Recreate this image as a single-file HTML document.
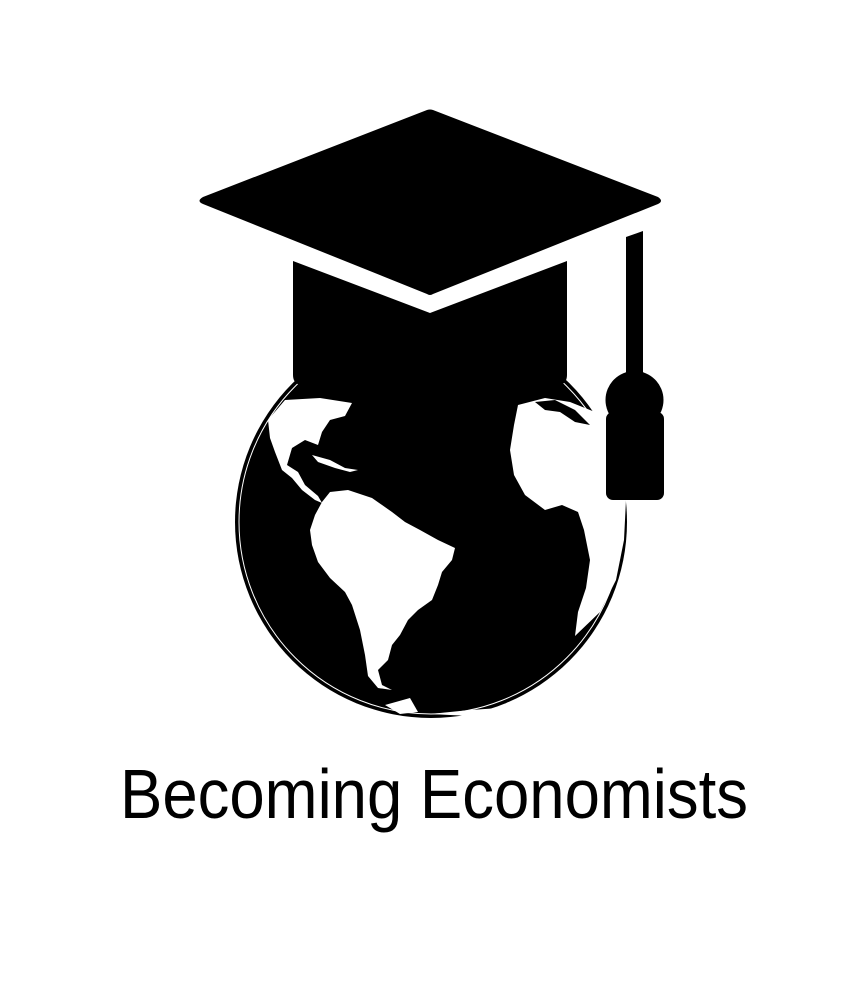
<!DOCTYPE html>
<html><head><meta charset="utf-8"><style>
html,body{margin:0;padding:0;background:#fff;width:864px;height:1000px;overflow:hidden}
</style></head><body>
<svg width="864" height="1000" viewBox="0 0 864 1000" xmlns="http://www.w3.org/2000/svg">
<rect width="864" height="1000" fill="#fff"/>
<circle cx="431" cy="522" r="196" fill="#000"/>
<circle cx="431" cy="522" r="192" fill="none" stroke="#fff" stroke-width="1"/>
<!-- North America -->
<path fill="#fff" d="M268,420 L285,400 L320,398 L352,403 L345,416 L330,420 L322,432 L318,445 L305,440 L292,448 L287,465 L298,472 L305,485 L318,496 L322,503 L315,500 L302,490 L292,478 L282,470 L275,452 L270,438 Z"/>
<path fill="#fff" d="M312,455 L330,460 L345,468 L358,470 L350,472 L335,468 L318,462 Z"/>
<!-- South America -->
<path fill="#fff" d="M330,492 L348,490 L372,498 L392,512 L405,522 L420,530 L438,540 L455,548 L452,560 L442,572 L438,585 L432,600 L418,610 L408,620 L400,635 L392,645 L388,660 L378,670 L382,685 L392,690 L378,688 L368,676 L365,655 L360,630 L352,605 L345,592 L330,578 L318,562 L312,545 L310,530 L315,515 L322,502 Z"/>
<!-- Africa -->
<path fill="#fff" d="M518,405 L545,398 L570,402 L595,412 L612,425 L622,460 L626,500 L624,540 L616,580 L600,612 L575,636 L578,612 L586,588 L590,560 L584,530 L578,512 L562,505 L545,510 L525,495 L514,475 L510,450 L514,425 Z"/>
<path fill="#000" d="M535,402 L555,400 L575,410 L590,425 L575,422 L560,412 L545,410 Z"/>
<!-- Antarctica hint -->
<path fill="#fff" d="M385,705 L410,698 L418,712 L400,714 Z"/>
<path fill="#fff" d="M430,714 L470,710 L500,708 L470,716 Z"/>
<!-- cap base -->
<path fill="#000" d="M293,261 L430,313 L567,261 L567,375 Q567,383 560,385 Q430,410 300,385 Q293,383 293,375 Z"/>
<!-- mortarboard -->
<path fill="#000" d="M203,197 L427,110 Q430,109 433,110 L658,197 Q664,201 658,204 L433,294 Q430,296 427,294 L203,204 Q196,201 203,197 Z"/>
<!-- tassel -->
<path fill="#000" d="M626,237 L643,231 L643,385 L626,385 Z"/>
<circle cx="634.5" cy="400" r="29" fill="#000"/>
<rect x="606" y="412" width="58" height="88" rx="7" fill="#000"/>
<path fill="#000" d="M612,430 Q620,405 634,405 Q648,405 656,430 Z"/>
<text x="120" y="818" font-family="Liberation Sans, sans-serif" font-size="70" textLength="628" lengthAdjust="spacingAndGlyphs" fill="#000">Becoming Economists</text>
</svg>
</body></html>
